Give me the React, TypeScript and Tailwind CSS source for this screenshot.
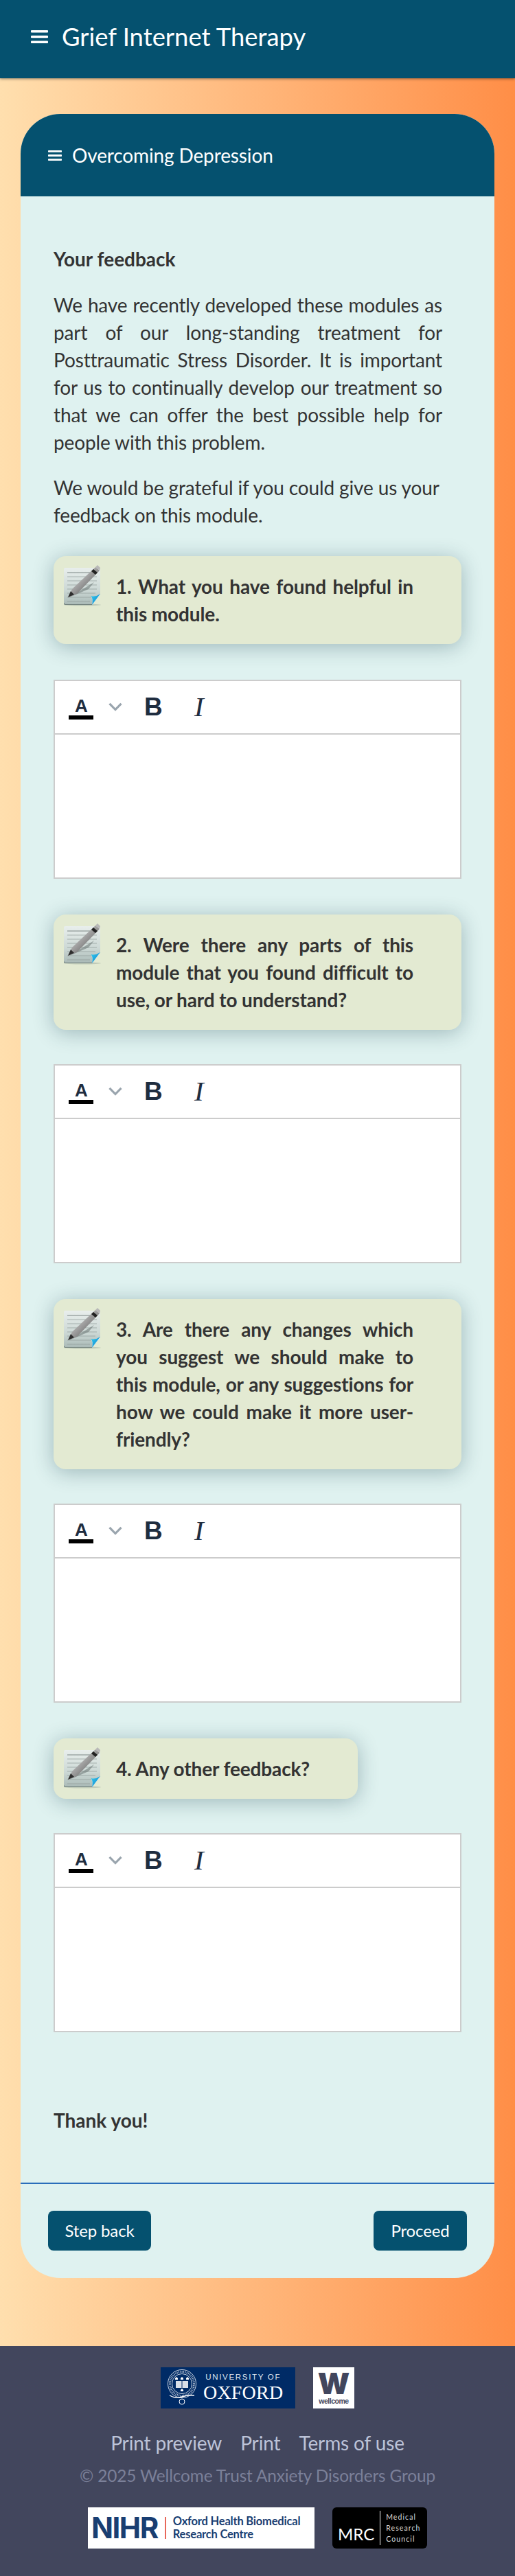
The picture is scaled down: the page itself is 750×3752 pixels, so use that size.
const questions = [
  { text: '1. What you have found helpful in this module.', editorGap: 'mt-[52px]', width: 'w-full' },
  { text: '2. Were there any parts of this module that you found difficult to use, or hard to understand?', editorGap: 'mt-[50px]', width: 'w-full' },
  { text: '3. Are there any changes which you suggest we should make to this module, or any suggestions for how we could make it more user-friendly?', editorGap: 'mt-[50px]', width: 'w-full' },
  { text: '4. Any other feedback?', editorGap: 'mt-[50px]', width: 'w-fit' },
];

function MenuIcon({ className }: { className: string }) {
  return (
    <svg viewBox="0 0 25 19" className={className} fill="white" preserveAspectRatio="none">
      <rect x="0" y="0" width="25" height="3.6" rx="1" />
      <rect x="0" y="7.7" width="25" height="3.6" rx="1" />
      <rect x="0" y="15.4" width="25" height="3.6" rx="1" />
    </svg>
  );
}

// notepad with a pen on it
function PenIcon() {
  return (
    <svg viewBox="0 0 55 60" className="absolute left-[15px] top-[13px] w-[55px] h-[60px]">
      <defs>
        <linearGradient id="page" x1="0" y1="0" x2="0" y2="1">
          <stop offset="0" stopColor="#e8eeec" />
          <stop offset="0.6" stopColor="#ccd8d5" />
          <stop offset="1" stopColor="#a9b9b6" />
        </linearGradient>
        <linearGradient id="pen" x1="0" y1="0" x2="1" y2="1">
          <stop offset="0" stopColor="#f2f2f2" />
          <stop offset="0.5" stopColor="#9a9a9a" />
          <stop offset="1" stopColor="#3a3a3a" />
        </linearGradient>
        <linearGradient id="curl" x1="0" y1="0" x2="1" y2="1">
          <stop offset="0" stopColor="#35d0f0" />
          <stop offset="1" stopColor="#0a78c8" />
        </linearGradient>
      </defs>
      <ellipse cx="27" cy="58" rx="27" ry="1.5" fill="#8a9a90" opacity="0.4" />
      <path d="M0 6 Q0 4 2 4 L53 4 L53 43 L41 58 L2 58 Q0 58 0 56 Z" fill="url(#page)" />
      <path d="M0 55 L0 56 Q0 58 2 58 L41 58 L41 57 L2 57 Z" fill="#74837f" />
      <g stroke="#8f9c99" strokeWidth="0.7">
        <line x1="5" y1="11" x2="48" y2="11" stroke="#6f7c79" strokeWidth="0.9" />
        <line x1="5" y1="17" x2="48" y2="17" />
        <line x1="5" y1="23" x2="48" y2="23" />
        <line x1="5" y1="29" x2="48" y2="29" />
        <line x1="5" y1="35" x2="48" y2="35" />
        <line x1="5" y1="41" x2="46" y2="41" />
        <line x1="5" y1="47" x2="40" y2="47" />
        <line x1="5" y1="53" x2="38" y2="53" />
      </g>
      <path d="M8 47 L44 25 L36 35 Z" fill="#6a7572" opacity="0.55" />
      <path d="M53 43 Q44 48 40 46 Q43 52 41 58 Z" fill="#f4f8f8" />
      <path d="M53 42 L41 58 Q43 50 39.5 45 Q46 47 53 42 Z" fill="url(#curl)" />
      <path d="M6 47 L12 35 L46 3 L52 8 L19 42 Z" fill="url(#pen)" />
      <path d="M6 47 L10 38 L15 43 Z" fill="#2e2e2e" />
      <path d="M40 9 L46 14 L49 11 L43 6 Z" fill="#222" />
      <path d="M46 3 L49 0 L53 4 L52 8 Z" fill="#b8b8b8" />
    </svg>
  );
}

function Question({ text, width }: { text: string; width: string }) {
  return (
    <div className={`relative ${width} rounded-[18px] bg-[#e3ead2] pl-[91px] pr-[70px] py-6 font-bold text-justify shadow-[0_4px_30px_rgba(20,60,70,0.32)]`}>
      <PenIcon />
      <p>{text}</p>
    </div>
  );
}

function Editor({ className }: { className: string }) {
  return (
    <div className={`${className} h-[290px] border-2 border-[#cccccc] bg-white`}>
      <div className="relative h-[78px] border-b-2 border-[#cccccc] tracking-normal">
        <span className="absolute left-[29px] top-[21px] w-[18px] text-center font-['Liberation_Sans'] text-[26px] leading-[30px] font-bold text-[#1f2d3f]">A</span>
        <span className="absolute left-5 top-[50px] h-[6px] w-[36px] bg-black" />
        <svg viewBox="0 0 20 13" className="absolute left-[78px] top-[31px] h-[13px] w-5" fill="none" stroke="#9aa5ae" strokeWidth="3.2">
          <path d="M1.5 1.8 L10 10.5 L18.5 1.8" />
        </svg>
        <span className="absolute left-[130px] top-4 font-['Liberation_Sans'] text-[37px] leading-[44px] font-bold text-[#1f2d3f]">B</span>
        <span className="absolute left-[203px] top-[13px] font-['Liberation_Serif'] text-[41px] leading-[48px] italic text-[#1f2d3f]">I</span>
      </div>
    </div>
  );
}

function OxfordLogo() {
  return (
    <div className="flex h-[60px] w-[196px] items-center bg-[#002b66] pl-[9px] tracking-normal text-white">
      <svg viewBox="0 0 44 54" className="h-[54px] w-[44px] shrink-0" fill="none" stroke="white">
        <circle cx="22" cy="21" r="20.5" strokeWidth="0.8" />
        <circle cx="22" cy="21" r="14.5" strokeWidth="0.8" />
        <circle cx="22" cy="21" r="17.5" strokeWidth="3" strokeDasharray="1 1.4" opacity="0.7" />
        <rect x="13" y="17" width="18" height="10" fill="white" stroke="none" opacity="0.85" />
        <line x1="22" y1="17" x2="22" y2="27" stroke="#002b66" strokeWidth="1" />
        <path d="M12 13l2-2 2 2v2h-4zM20 13l2-2 2 2v2h-4zM28 13l2-2 2 2v2h-4zM20 30l2-2 2 2v2h-4z" fill="white" stroke="none" />
        <path d="M4 38q9 5 18 2t18-2" strokeWidth="1.4" />
        <circle cx="22" cy="47" r="4" strokeWidth="1" />
      </svg>
      <div className="ml-[9px] flex flex-col leading-none">
        <span className="font-['Liberation_Sans'] text-[11.5px] tracking-[1.7px] text-[#dfe5ee]">UNIVERSITY OF</span>
        <span className="mt-[3px] font-['Liberation_Serif'] text-[28px] leading-[28px] tracking-[0.2px]">OXFORD</span>
      </div>
    </div>
  );
}

function WellcomeLogo() {
  return (
    <div className="flex h-[60px] w-[60px] flex-col items-center bg-white tracking-normal text-[#42465d]">
      <span className="mt-[3px] font-['Inter'] text-[43px] leading-[40px] font-black">W</span>
      <span className="font-['Liberation_Sans'] text-[10.5px] leading-[12px] font-bold tracking-[-0.5px]">wellcome</span>
    </div>
  );
}

function NihrLogo() {
  return (
    <div className="flex h-[60px] w-[330px] items-center bg-white pl-[5px] tracking-normal text-[#193e72]">
      <span className="font-['Inter'] text-[42px] leading-none font-bold tracking-[-1.5px]">NIHR</span>
      <span className="ml-[10px] h-[32px] w-[2px] bg-[#e8685a]" />
      <div className="ml-[10px] flex flex-col text-left text-[16.5px] leading-[19px] font-bold tracking-[-0.2px]">
        <span>Oxford Health Biomedical</span>
        <span>Research Centre</span>
      </div>
    </div>
  );
}

function MrcLogo() {
  return (
    <div className="flex h-[60px] w-[138px] items-end rounded-[6px] bg-black pb-[7px] pl-2 tracking-normal text-white">
      <span className="mb-[2px] text-[24px] leading-[24px]">MRC</span>
      <span className="mb-[-2px] ml-2 h-[50px] w-px bg-white" />
      <div className="mb-[-1px] ml-2 flex flex-col text-left text-[10.5px] leading-4 tracking-[1.1px] text-[#dddddd]">
        <span>Medical</span>
        <span>Research</span>
        <span>Council</span>
      </div>
    </div>
  );
}

export default function App() {
  return (
    <div className="h-[3752px] w-[750px] overflow-hidden font-['Lato'] text-[28px] leading-10 tracking-[-0.13px] text-[#333333]">
      <header className="relative z-10 flex h-[114px] items-start gap-5 bg-[#05516f] pl-[45px] pt-[33px] text-white shadow-[0_1px_4px_rgba(0,0,0,0.4)]">
        <MenuIcon className="mt-[11px] h-[19px] w-[25px]" />
        <h1 className="text-[36.4px] leading-10 tracking-normal">Grief Internet Therapy</h1>
      </header>

      <main className="h-[3303px] bg-[linear-gradient(90deg,#ffdfae,#ff8e47)] px-[30px] pt-[52px]">
        <div className="h-[3152px] overflow-hidden rounded-[58px] bg-[#dff2f0]">
          <div className="flex h-[120px] items-center gap-[15px] bg-[#05516f] pl-10 text-[28px] text-white">
            <MenuIcon className="h-[15px] w-5" />
            <span>Overcoming Depression</span>
          </div>

          <div className="px-12 pt-[71px]">
            <h2 className="font-bold tracking-normal">Your feedback</h2>
            <p className="mt-[27px] pr-7 text-justify">
              We have recently developed these modules as part of our long-standing treatment for Posttraumatic Stress Disorder. It is important for us to continually develop our treatment so that we can offer the best possible help for people with this problem.
            </p>
            <p className="mt-[26px] pr-7">We would be grateful if you could give us your feedback on this module.</p>

            <div className="mt-10 flex flex-col items-start">
              {questions.map((q, i) => (
                <div key={i} className="mb-[52px] w-full last:mb-0">
                  <Question text={q.text} width={q.width} />
                  <Editor className={q.editorGap} />
                </div>
              ))}
            </div>

            <p className="mt-[108px] font-bold tracking-normal">Thank you!</p>
          </div>

          <div className="mt-[71px] border-t-2 border-[#2a6ebb] px-10 pt-[39px]">
            <div className="flex justify-between text-[24px] text-white">
              <button className="h-[58px] w-[150px] rounded-[8px] bg-[#05516f]">Step back</button>
              <button className="h-[58px] w-[136px] rounded-[8px] bg-[#05516f]">Proceed</button>
            </div>
          </div>
        </div>
      </main>

      <footer className="h-[335px] bg-[#42465d] pt-[31px] text-center">
        <div className="flex justify-center gap-[26px]">
          <OxfordLogo />
          <WellcomeLogo />
        </div>
        <div className="mt-[30px] flex justify-center gap-[27px] text-[#bcc3d8]">
          <a>Print preview</a>
          <a>Print</a>
          <a>Terms of use</a>
        </div>
        <p className="mt-2 text-[24.4px] text-[#7b8099]">© 2025 Wellcome Trust Anxiety Disorders Group</p>
        <div className="mt-[26px] flex justify-center gap-[26px]">
          <NihrLogo />
          <MrcLogo />
        </div>
      </footer>
    </div>
  );
}
